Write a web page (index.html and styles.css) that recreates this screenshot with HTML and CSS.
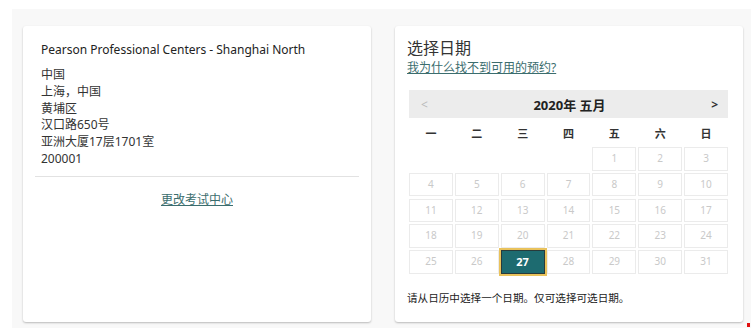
FILE: index.html
```html
<!DOCTYPE html>
<html lang="zh">
<head>
    <meta charset="UTF-8">
    <meta name="viewport" content="width=device-width, initial-scale=1.0">
    <title>选择日期</title>
    <link rel="stylesheet" href="styles.css">
</head>
<body>
    <div class="page">
        <div class="card center-card">
            <div class="center-info">
                <div class="center-name">Pearson Professional Centers - Shanghai North</div>
                <div class="address">
                    <div>中国</div>
                    <div>上海，中国</div>
                    <div>黄埔区</div>
                    <div>汉口路650号</div>
                    <div>亚洲大厦17层1701室</div>
                    <div>200001</div>
                </div>
            </div>
            <div class="divider"></div>
            <div class="change-link"><a href="#">更改考试中心</a></div>
        </div>

        <div class="card date-card">
            <h2 class="date-title">选择日期</h2>
            <a class="help-link" href="#">我为什么找不到可用的预约?</a>

            <div class="calendar">
                <div class="cal-head">
                    <span class="nav prev">&lt;</span>
                    <span class="month">2020年 五月</span>
                    <span class="nav next">&gt;</span>
                </div>
                <div class="weekdays">
                    <span>一</span><span>二</span><span>三</span><span>四</span><span>五</span><span>六</span><span>日</span>
                </div>
                <div class="days" id="days"></div>
            </div>

            <p class="hint">请从日历中选择一个日期。仅可选择可选日期。</p>
        </div>
    </div>
    <span class="marker"></span>

    <script>
        // May 2020 starts on a Friday
        const days = document.getElementById('days');
        for (let i = 0; i < 4; i++) {
            const blank = document.createElement('span');
            blank.className = 'day empty';
            days.appendChild(blank);
        }
        for (let d = 1; d <= 31; d++) {
            const cell = document.createElement('span');
            cell.className = d === 27 ? 'day selected' : 'day';
            cell.textContent = d;
            days.appendChild(cell);
        }
    </script>
</body>
</html>
```

FILE: styles.css
```css
* {
    margin: 0;
    padding: 0;
    box-sizing: border-box;
}

body {
    background: #ffffff;
    font-family: "Noto Sans", "Noto Sans CJK SC", sans-serif;
    color: #2b2b2b;
    padding: 9px 0 0 12px;
    overflow: hidden;
}

.page {
    background: #f8f8f8;
    display: flex;
    gap: 24px;
    padding: 17px 8px 0 11px;
    height: 319px;
}

.card {
    background: #ffffff;
    width: 348px;
    height: 296px;
    border-radius: 3px;
    box-shadow: 0 1px 2px rgba(0, 0, 0, 0.25);
}

a {
    color: #3b6d6e;
}

/* left card */
.center-card {
    padding: 14px 12px 0;
}

.center-info {
    padding: 0 6px;
}

.center-name {
    font-size: 12px;
    line-height: 20px;
    color: #222;
}

.address {
    margin-top: 7px;
    font-size: 12px;
    line-height: 16.8px;
    color: #333;
}

.divider {
    border-top: 1px solid #e2e2e2;
    margin-top: 8px;
}

.change-link {
    text-align: center;
    font-size: 12px;
    margin-top: 13px;
}

/* right card */
.date-card {
    padding: 11px 15px 0 12px;
}

.date-title {
    font-size: 16px;
    font-weight: normal;
    line-height: 22px;
    color: #333;
}

.help-link {
    display: block;
    font-size: 12px;
    line-height: 17px;
}

.calendar {
    margin: 14px 0 0 2px;
}

.cal-head {
    background: #ececec;
    height: 28px;
    display: flex;
    align-items: center;
    justify-content: space-between;
    padding: 0 10px 0 12px;
}

.month {
    font-size: 13px;
    font-weight: 700;
    color: #222;
}

.nav {
    font-size: 12px;
    font-weight: 700;
    color: #333;
}

.prev {
    color: #bbb;
    font-weight: normal;
}

.weekdays {
    display: grid;
    grid-template-columns: repeat(7, 1fr);
    column-gap: 2px;
    height: 29px;
    align-items: center;
    font-size: 11px;
    font-weight: 700;
    color: #333;
}

.weekdays span,
.day {
    text-align: center;
}

.days {
    display: grid;
    grid-template-columns: repeat(7, 1fr);
    grid-auto-rows: 23.5px;
    gap: 2.3px 2px;
}

.day {
    border: 1px solid #ebebeb;
    font-size: 10px;
    line-height: 21.5px;
    color: #c9c9c9;
}

.day.empty {
    border: none;
}

.day.selected {
    background: #1d6b70;
    color: #ffffff;
    font-weight: 700;
    font-size: 11px;
    border: 1px solid #283b3b;
    outline: 2px solid #e9c25c;
    outline-offset: 0;
}

.hint {
    font-size: 10.6px;
    margin-top: 16px;
    color: #222;
}

.marker {
    position: absolute;
    left: 747px;
    top: 323px;
    width: 3px;
    height: 4px;
    background: #e01010;
}
```
